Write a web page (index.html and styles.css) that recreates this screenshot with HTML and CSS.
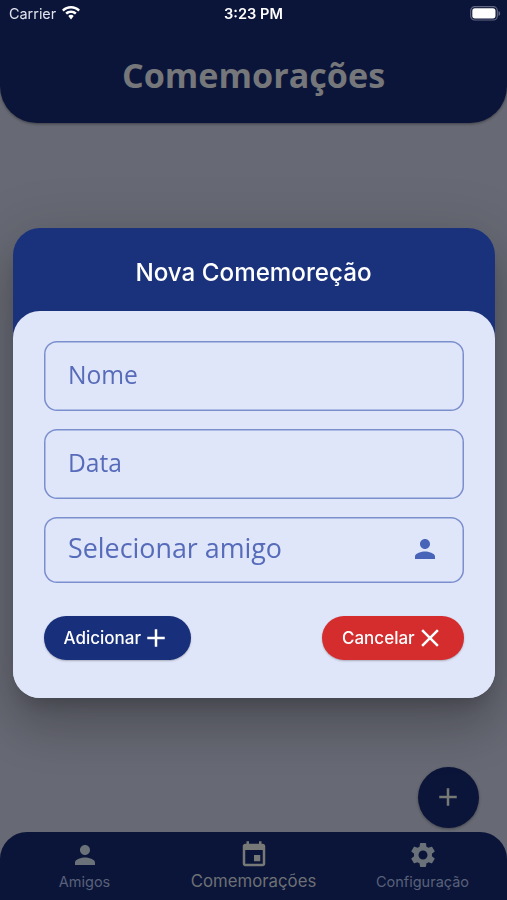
FILE: index.html
```html
<!DOCTYPE html>
<html lang="pt-BR">
<head>
<meta charset="utf-8">
<meta name="viewport" content="width=device-width, initial-scale=1">
<title>Comemorações</title>
<link rel="stylesheet" href="styles.css">
</head>
<body>
<div class="app">
  <header class="app-header"><h1>Comemorações</h1></header>
  <main class="content">
    <button class="fab" aria-label="Adicionar"><svg class="icon" viewBox="0 0 24 24"><path d="M19 13h-6v6h-2v-6H5v-2h6V5h2v6h6v2z"/></svg></button>
  </main>
  <nav class="tabs">
    <a class="tab"><svg class="icon" viewBox="0 0 24 24"><path d="M12 12c2.21 0 4-1.79 4-4s-1.79-4-4-4-4 1.79-4 4 1.79 4 4 4zm0 2c-2.67 0-8 1.34-8 4v2h16v-2c0-2.66-5.33-4-8-4z"/></svg><span>Amigos</span></a>
    <a class="tab active"><svg class="icon" viewBox="0 0 24 24"><path d="M17 12h-5v5h5v-5zM16 1v2H8V1H6v2H5c-1.11 0-1.99.9-1.99 2L3 19c0 1.1.89 2 2 2h14c1.1 0 2-.9 2-2V5c0-1.1-.9-2-2-2h-1V1h-2zm3 18H5V8h14v11z"/></svg><span>Comemorações</span></a>
    <a class="tab"><svg class="icon" viewBox="0 0 24 24"><path d="M19.14 12.94c.04-.3.06-.61.06-.94 0-.32-.02-.64-.07-.94l2.03-1.58c.18-.14.23-.41.12-.61l-1.92-3.32c-.12-.22-.37-.29-.59-.22l-2.39.96c-.5-.38-1.03-.7-1.62-.94l-.36-2.54c-.04-.24-.24-.41-.48-.41h-3.84c-.24 0-.43.17-.47.41l-.36 2.54c-.59.24-1.13.57-1.62.94l-2.39-.96c-.22-.08-.47 0-.59.22L2.74 8.87c-.12.21-.08.47.12.61l2.03 1.58c-.05.3-.09.63-.09.94s.02.64.07.94l-2.03 1.58c-.18.14-.23.41-.12.61l1.92 3.32c.12.22.37.29.59.22l2.39-.96c.5.38 1.03.7 1.62.94l.36 2.54c.05.24.24.41.48.41h3.84c.24 0 .44-.17.47-.41l.36-2.54c.59-.24 1.13-.56 1.62-.94l2.39.96c.22.08.47 0 .59-.22l1.92-3.32c.12-.22.07-.47-.12-.61l-2.01-1.58zM12 15.6c-1.98 0-3.6-1.62-3.6-3.6s1.62-3.6 3.6-3.6 3.6 1.62 3.6 3.6-1.62 3.6-3.6 3.6z"/></svg><span>Configuração</span></a>
  </nav>
</div>
<div class="overlay">
  <div class="status">
    <div class="carrier"><span>Carrier</span><svg class="wifi" viewBox="0 0 18 14"><path d="M9 0C5.600 0 2.400 1.300 0 3.700l1.700 1.800C3.700 3.600 6.200 2.500 9 2.500s5.300 1.100 7.300 3L18 3.700C15.600 1.300 12.400 0 9 0zM9 4.500c-2.200 0-4.200.8-5.700 2.300L5 8.500c1.100-1 2.500-1.600 4-1.600s2.900.6 4 1.600l1.700-1.700C13.200 5.300 11.200 4.500 9 4.500zM9 8.800c-1.100 0-2 .4-2.700 1.100L9 13.500l2.700-3.600C11 9.200 10.100 8.800 9 8.800z"/></svg></div>
    <span class="time">3:23 PM</span>
    <svg class="battery" viewBox="0 0 31 15"><rect x=".7" y=".7" width="26.600" height="13.300" rx="4" class="shell"/><rect x="2.300" y="2.300" width="23.200" height="10.100" rx="2.600" class="charge"/><path d="M28.500 5v5c2.200-.8 2.200-4.200 0-5z" class="cap"/></svg>
  </div>
  <section class="dialog" role="dialog" aria-label="Nova Comemoreção">
    <h2>Nova Comemoreção</h2>
    <form class="sheet">
      <div class="field"><span>Nome</span></div>
      <div class="field"><span>Data</span></div>
      <div class="field select"><span>Selecionar amigo</span><svg class="icon" viewBox="0 0 24 24"><path d="M12 12c2.210 0 4-1.790 4-4s-1.790-4-4-4-4 1.790-4 4 1.790 4 4 4zm0 2c-2.670 0-8 1.340-8 4v2h16v-2c0-2.660-5.330-4-8-4z"/></svg></div>
      <div class="actions">
        <button type="button" class="btn add"><span>Adicionar</span><svg class="icon" viewBox="0 0 24 24"><path d="M19 13h-6v6h-2v-6H5v-2h6V5h2v6h6v2z"/></svg></button>
        <button type="button" class="btn cancel"><span>Cancelar</span><svg class="icon" viewBox="0 0 24 24"><path d="M19 6.410L17.590 5 12 10.590 6.410 5 5 6.410 10.590 12 5 17.590 6.410 19 12 13.410 17.590 19 19 17.590 13.410 12z"/></svg></button>
      </div>
    </form>
  </section>
</div>
</body>
</html>
```
FILE: styles.css
```css
* { box-sizing: border-box; }
body { margin: 0; font-family: Inter, "Liberation Sans", sans-serif; }
h1, h2 { margin: 0; }
button { border: 0; font: inherit; padding: 0; }
.icon { width: 30px; height: 30px; fill: currentColor; flex: none; display: block; }

.app { height: 900px; display: flex; flex-direction: column; background: #676974; overflow: hidden; }
.app-header {
  height: 123px; padding-top: 26px; display: flex; align-items: center; justify-content: center;
  background: #0b1539; border-radius: 0 0 37px 37px; box-shadow: 0 1px 3px rgba(0, 0, 0, .4);
}
.app-header h1 { font: 700 34.150px/46px "Open Sans", sans-serif; color: #75777a; }
.content { flex: 1; display: flex; align-items: flex-end; justify-content: flex-end; padding: 0 28.500px 4px 0; }
.fab {
  width: 61px; height: 61px; border-radius: 50%; display: grid; place-items: center;
  background: #0b1539; color: #777977; box-shadow: 0 1px 3px rgba(0, 0, 0, .35);
}
.fab .icon { margin-bottom: 1px; }
.tabs {
  height: 68px; display: grid; grid-template-columns: repeat(3, 1fr);
  background: #0b1539; border-radius: 27px 27px 0 0;
}
.tab { display: flex; flex-direction: column; align-items: center; padding-top: 8px; color: #6b7178; }
.tab span { font-size: 14.500px; line-height: 20px; margin-top: 2px; white-space: nowrap; color: #596179; }
.tab.active { color: #777977; }
.tab.active span { font-size: 16.800px; margin-top: 1px; color: #6d7074; }

.overlay { position: fixed; inset: 0; height: 900px; display: flex; flex-direction: column; }
.status {
  height: 28px; margin-bottom: 200px; padding: 0 6px 0 9px; display: grid;
  grid-template-columns: 215px auto 1fr; align-items: center; color: #fff; font-size: 14.600px;
}
.carrier { display: flex; align-items: center; gap: 6px; color: #dfe2ec; }
.carrier span { font-size: 14.400px; line-height: 18px; margin-bottom: 1px; }
.wifi { width: 18px; height: 14px; fill: #fff; margin-bottom: 2px; }
.time { font-weight: 600; }
.battery { width: 31px; height: 15px; justify-self: end; margin-bottom: 2px; }
.shell { fill: none; stroke: #626781; stroke-width: 1.200; }
.charge { fill: #fff; }
.cap { fill: #626781; }

.dialog {
  width: 482px; height: 470px; margin-left: 13px; display: flex; flex-direction: column;
  border-radius: 27px; background: linear-gradient(#1a327c 0 130px, #e0e6f9 130px);
  box-shadow: 0 14px 19px -9px rgba(0, 0, 0, .2), 0 30px 48px 4px rgba(0, 0, 0, .14), 0 11px 58px 10px rgba(0, 0, 0, .12);
}
.dialog h2 { height: 83px; padding: 5px 1px 0 0; text-align: center; font-size: 24.200px; line-height: 79px; font-weight: 500; color: #fff; }
.sheet { flex: 1; padding: 30px 31px 38px 30.500px; background: #e0e6f9; border-radius: 27px; display: flex; flex-direction: column; }
.field {
  height: 70px; margin-bottom: 18px; padding: 0 24.500px; border-radius: 13px;
  box-shadow: inset 0 0 0 1.500px #7b8fcf;
  display: flex; align-items: center; justify-content: space-between;
  font: 400 24.600px/34px "Open Sans", sans-serif; color: #566bba;
}
.field span { padding-bottom: 2px; }
.field.select { height: 66px; font-size: 26.850px; margin-bottom: 33px; }
.select span { padding-bottom: 4px; }
.select .icon { color: #4864b8; margin-bottom: 2px; }
.actions { display: flex; justify-content: space-between; }
.btn {
  height: 44px; border-radius: 22px; display: flex; align-items: center; color: #fff;
  font-size: 17px; font-weight: 500; padding-left: 20px; box-shadow: 0 1px 2px rgba(0, 0, 0, .25);
}
.add { width: 147px; background: #182f7b; }
.cancel { width: 142px; background: #d52c2e; }
```
